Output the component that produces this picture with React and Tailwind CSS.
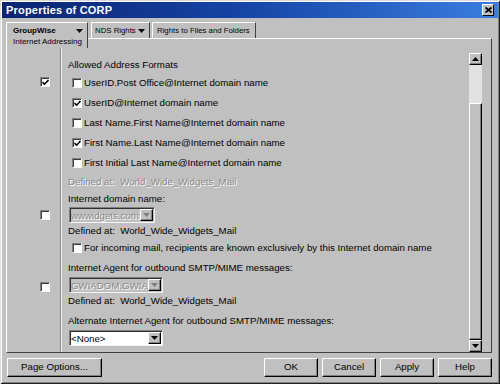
import React from "react";

function Check({ checked }) {
  return (
    <div className="flex h-[10px] w-[10px] shrink-0 items-center justify-center border border-t-[#808080] border-l-[#808080] border-r-white border-b-white bg-white shadow-[inset_1px_1px_0_#404040]">
      {checked && (
        <svg width="7" height="7" viewBox="0 0 7 7">
          <path d="M0.5 3 L2.5 5.2 L6.5 1" stroke="#000" strokeWidth="1.6" fill="none" />
        </svg>
      )}
    </div>
  );
}

function Arrow({ up, color = "#000" }) {
  return (
    <svg width="7" height="4" viewBox="0 0 7 4">
      <path d={up ? "M0 4 L3.5 0 L7 4 Z" : "M0 0 L7 0 L3.5 4 Z"} fill={color} />
    </svg>
  );
}

function CheckRow({ checked, children }) {
  return (
    <div className="flex h-[20px] items-center pl-[4px]">
      <Check checked={checked} />
      <span className="ml-[2px]">{children}</span>
    </div>
  );
}

function Combo({ value, width, disabled }) {
  return (
    <div
      className={`ml-[1px] flex h-[16px] ${width} border border-t-[#808080] border-l-[#808080] border-r-[#f4f4f4] border-b-[#f4f4f4] shadow-[inset_1px_1px_0_#303030] ${
        disabled ? "bg-[#c0c0c0]" : "bg-white"
      }`}
    >
      <div
        className={`min-w-0 flex-1 overflow-hidden whitespace-nowrap pl-[1px] pt-[1px] leading-[13px] ${
          disabled ? "text-[#8a8a8a] [text-shadow:1px_1px_0_#ffffff]" : "text-black"
        }`}
      >
        {value}
      </div>
      <div className="mt-[1px] mr-[1px] mb-[1px] flex w-[13px] shrink-0 items-center justify-center border border-t-white border-l-white border-r-black border-b-black bg-[#c0c0c0] shadow-[inset_-1px_-1px_0_#808080]">
        <Arrow color={disabled ? "#808080" : "#000"} />
      </div>
    </div>
  );
}

function Defined({ disabled }) {
  return (
    <div
      className={`flex h-[16px] items-center whitespace-pre ${
        disabled ? "text-[#8a8a8a] [text-shadow:1px_1px_0_#ffffff]" : ""
      }`}
    >
      {"Defined at:  World_Wide_Widgets_Mail"}
    </div>
  );
}

function Button({ children, width }) {
  return (
    <div
      className={`flex h-[19px] ${width} items-center justify-center border border-t-white border-l-white border-r-black border-b-black bg-[#c0c0c0] shadow-[inset_-1px_-1px_0_#808080]`}
    >
      {children}
    </div>
  );
}

export default function App() {
  return (
    <div className="h-[384px] w-[500px] overflow-hidden bg-[#c0c0c0] font-['Liberation_Sans',Arial,sans-serif] text-[9.7px] text-black shadow-[inset_1px_1px_0_#dcdcdc,inset_-1px_-1px_0_#202020,inset_2px_2px_0_#ffffff,inset_-2px_-2px_0_#808080]">
      {/* title bar */}
      <div className="mx-[2px] mt-[2px] flex h-[16px] items-center justify-between bg-linear-to-r from-[#0a2470] via-[#1746a8] to-[#3a7ee0] pl-[4px] pr-[4px]">
        <span className="text-[11px] font-bold tracking-[0.2px] text-white">Properties of CORP</span>
        <div className="flex h-[12px] w-[12px] items-center justify-center border border-t-white border-l-white border-r-black border-b-black bg-[#c0c0c0]">
          <svg width="7" height="6" viewBox="0 0 7 6">
            <path d="M0.5 0.5 L6.5 5.5 M6.5 0.5 L0.5 5.5" stroke="#000" strokeWidth="1.8" />
          </svg>
        </div>
      </div>

      {/* tabs + panel */}
      <div className="ml-[6px] mt-[4px] w-[486px]">
        <div className="flex h-[26px]">
          <div className="flex w-[82px] flex-col whitespace-nowrap border-t border-l border-r border-t-white border-l-white border-r-[#404040] pl-[6px] pr-[4px] pt-[2px] text-[8px] leading-[11px]">
            <div className="flex items-center justify-between">
              <span className="font-bold">GroupWise</span>
              <Arrow />
            </div>
            <span>Internet Addressing</span>
          </div>
          <div className="flex flex-1 flex-col">
            <div className="flex h-[16px] text-[7.8px]">
              <div className="ml-[3px] flex w-[59px] items-center justify-between border-t border-l border-r border-t-white border-l-white border-r-[#404040] pl-[3px] pr-[4px]">
                <span>NDS Rights</span>
                <Arrow />
              </div>
              <div className="ml-[2px] flex w-[104px] items-center border-t border-l border-r border-t-white border-l-white border-r-[#404040] pl-[4px]">
                <span>Rights to Files and Folders</span>
              </div>
            </div>
            <div className="flex-1 border-t border-r border-t-white border-r-[#404040]" />
          </div>
        </div>

        <div className="flex h-[305px] border-l border-r border-b border-l-white border-r-[#404040] border-b-[#404040]">
          {/* left column */}
          <div className="flex w-[54px] flex-col border-r border-r-[#8a8a8a] pl-[33px]">
            <div className="mt-[29px]">
              <Check checked />
            </div>
            <div className="mt-[123px]">
              <Check />
            </div>
            <div className="mt-[62px]">
              <Check />
            </div>
          </div>

          {/* content */}
          <div className="flex flex-1 flex-col border-l border-l-[#eeeeee] pl-[6px] pt-[10px]">
            <div className="flex h-[15px] items-center">Allowed Address Formats</div>
            <CheckRow>UserID.Post Office@Internet domain name</CheckRow>
            <CheckRow checked>UserID@Internet domain name</CheckRow>
            <CheckRow>Last Name.First Name@Internet domain name</CheckRow>
            <CheckRow checked>First Name.Last Name@Internet domain name</CheckRow>
            <CheckRow>First Initial Last Name@Internet domain name</CheckRow>
            <div className="h-[1px]" />
            <Defined disabled />
            <div className="flex h-[17px] items-center pt-[1px]">Internet domain name:</div>
            <Combo value="wwwidgets.com" width="w-[86px]" disabled />
            <Defined />
            <div className="flex h-[18px] items-center pl-[4px]">
              <Check />
              <span className="ml-[2px]">For incoming mail, recipients are known exclusively by this Internet domain name</span>
            </div>
            <div className="flex h-[20px] items-end pb-[1px]">Internet Agent for outbound SMTP/MIME messages:</div>
            <Combo value="GWIADOM.GWIA" width="w-[94px]" disabled />
            <Defined />
            <div className="flex h-[21px] items-end pb-[1px]">Alternate Internet Agent for outbound SMTP/MIME messages:</div>
            <Combo value="<None>" width="w-[94px]" />
          </div>

          {/* scrollbar */}
          <div className="mt-[5px] mr-[9px] flex w-[13px] flex-col">
            <div className="flex h-[12px] items-center justify-center border border-t-white border-l-white border-r-black border-b-black bg-[#c0c0c0] shadow-[inset_-1px_-1px_0_#808080]">
              <Arrow up />
            </div>
            <div className="h-[38px] bg-[#e2e2e2]" />
            <div className="flex-1 border border-t-white border-l-white border-r-black border-b-black bg-[#c0c0c0] shadow-[inset_-1px_-1px_0_#808080]" />
            <div className="flex h-[12px] items-center justify-center border border-t-white border-l-white border-r-black border-b-black bg-[#c0c0c0] shadow-[inset_-1px_-1px_0_#808080]">
              <Arrow />
            </div>
          </div>
        </div>
      </div>

      {/* buttons */}
      <div className="ml-[7px] mt-[5px] flex w-[485px] justify-between">
        <Button width="w-[95px]">Page Options...</Button>
        <div className="flex gap-[4px]">
          <Button width="w-[54px]">OK</Button>
          <Button width="w-[54px]">Cancel</Button>
          <Button width="w-[54px]">Apply</Button>
          <Button width="w-[54px]">Help</Button>
        </div>
      </div>
    </div>
  );
}
